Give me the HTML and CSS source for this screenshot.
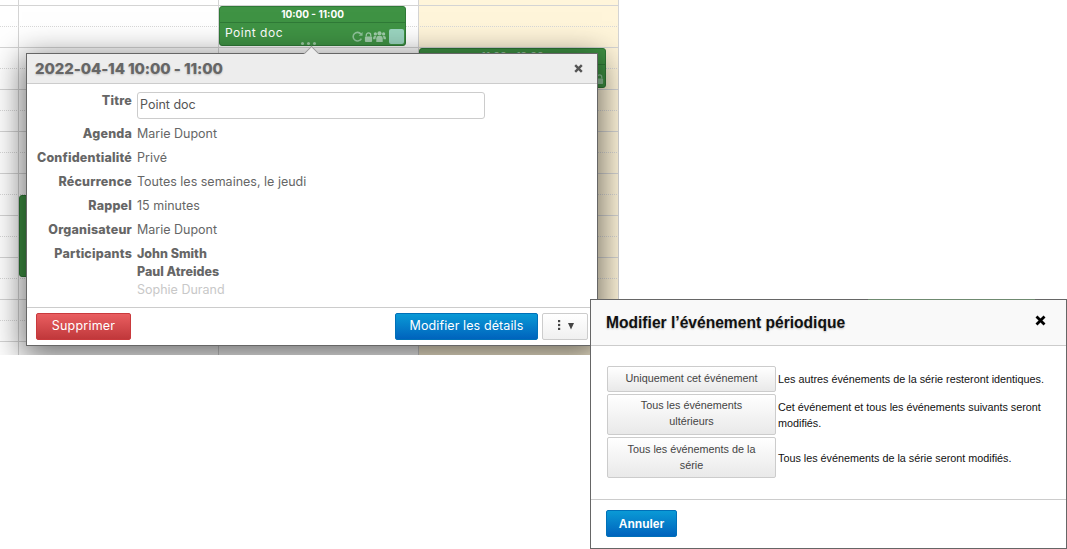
FILE: index.html
```html
<!DOCTYPE html>
<html lang="fr">
<head>
    <meta charset="utf-8">
    <title>Point doc</title>
    <link rel="stylesheet" href="styles.css">
</head>
<body>
<div class="calendar">
    <div class="dayCol gutter"></div>
    <div class="dayCol"></div>
    <div class="dayCol"></div>
    <div class="dayCol today"></div>

    <div class="hourLines">
        <div class="hourRow"></div>
        <div class="hourRow"></div>
        <div class="hourRow"></div>
        <div class="hourRow"></div>
        <div class="hourRow"></div>
        <div class="hourRow"></div>
        <div class="hourRow"></div>
        <div class="hourRow"></div>
        <div class="hourRow"></div>
    </div>

    <div class="event eventMain">
        <div class="eventTime">10:00 - 11:00</div>
        <div class="eventBody">
            <span>Point doc</span>
            <span class="eventIcons">
                <svg class="iconRefresh" width="11" height="11" viewBox="0 0 12 12"><path d="M10.200 8.300a4.700 4.700 0 1 1-.5-5" fill="none" stroke="#8fc39a" stroke-width="1.700"/><path d="M11.500 1v4.200H7.300z" fill="#8fc39a"/></svg>
                <svg width="9" height="10" viewBox="0 0 10 11"><path d="M2.500 5V3.500a2.500 2.500 0 0 1 5 0V5" fill="none" stroke="#a0ccaa" stroke-width="1.400"/><rect x="1" y="5" width="8" height="6" rx="1" fill="#a0ccaa"/></svg>
                <svg width="13" height="11" viewBox="0 0 14 12"><g fill="#a0ccaa"><circle cx="7" cy="2.600" r="2.300"/><circle cx="2.500" cy="3.200" r="1.800"/><circle cx="11.500" cy="3.200" r="1.800"/><path d="M3.500 12V8q0-2.500 2-2.500h3q2 0 2 2.500v4z"/><path d="M0 9V7.500q0-2 2-2h1.200L2.500 9zM14 9V7.500q0-2-2-2h-1.200l.7 3.500z"/></g></svg>
                <span class="swatch"></span>
            </span>
        </div>
        <div class="dots"><i></i><i></i><i></i></div>
    </div>

    <div class="event eventSecond">
        <div class="eventTime">11:00 - 12:00</div>
        <div class="eventBody">
            <span class="eventIcons secondIcons">
                <svg width="9" height="10" viewBox="0 0 10 11"><path d="M2.500 5V3.500a2.500 2.500 0 0 1 5 0V5" fill="none" stroke="#8fc39a" stroke-width="1.400"/><rect x="1" y="5" width="8" height="6" rx="1" fill="#8fc39a"/></svg>
            </span>
        </div>
    </div>
    <div class="event eventLeft"></div>

    <div class="popover">
        <div class="arrow"></div>
        <div class="popHead">
            <span class="popTitle">2022-04-14 10:00 - 11:00</span>
            <svg class="popClose" width="9" height="9" viewBox="0 0 9 9"><path d="M1.200 1.200l6.600 6.600M7.800 1.200L1.200 7.800" stroke="#555" stroke-width="2.400"/></svg>
        </div>
        <div class="popBody">
            <div class="row rowTitle">
                <div class="label">Titre</div>
                <input class="titleInput" type="text" value="Point doc">
            </div>
            <div class="row"><div class="label">Agenda</div><div>Marie Dupont</div></div>
            <div class="row"><div class="label">Confidentialité</div><div>Privé</div></div>
            <div class="row"><div class="label">Récurrence</div><div>Toutes les semaines, le jeudi</div></div>
            <div class="row"><div class="label">Rappel</div><div>15 minutes</div></div>
            <div class="row"><div class="label">Organisateur</div><div>Marie Dupont</div></div>
            <div class="row">
                <div class="label">Participants</div>
                <div class="people">
                    <div class="going">John Smith</div>
                    <div class="going">Paul Atreides</div>
                    <div class="absent">Sophie Durand</div>
                </div>
            </div>
        </div>
        <div class="popFoot">
            <button class="btn btnRed">Supprimer</button>
            <button class="btn btnBlue">Modifier les détails</button>
            <button class="btn btnMore">
                <svg width="17" height="10" viewBox="0 0 17 10"><g fill="#444"><rect x="1" y="0" width="2.200" height="2.200"/><rect x="1" y="3.900" width="2.200" height="2.200"/><rect x="1" y="7.800" width="2.200" height="2.200"/><path d="M11 3h6l-3 6.500z"/></g></svg>
            </button>
        </div>
    </div>
</div>

<div class="dialog">
    <div class="dialogHead">
        <span class="dialogTitle">Modifier l’événement périodique</span>
        <svg class="dialogClose" width="11" height="11" viewBox="0 0 11 11"><path d="M1.500 1.500l8 8M9.500 1.500l-8 8" stroke="#000" stroke-width="2.800"/></svg>
    </div>
    <div class="dialogBody">
        <div class="choice">
            <button class="choiceBtn">Uniquement cet événement</button>
            <div class="choiceText">Les autres événements de la série resteront identiques.</div>
        </div>
        <div class="choice">
            <button class="choiceBtn">Tous les événements ultérieurs</button>
            <div class="choiceText">Cet événement et tous les événements suivants seront modifiés.</div>
        </div>
        <div class="choice choiceLast">
            <button class="choiceBtn">Tous les événements de la série</button>
            <div class="choiceText">Tous les événements de la série seront modifiés.</div>
        </div>
    </div>
    <div class="dialogFoot">
        <button class="btnCancel">Annuler</button>
    </div>
</div>

<div class="behindStrip"></div>
</body>
</html>
```

FILE: styles.css
```css
html, body {
    margin: 0;
    padding: 0;
    background: #fff;
}
body {
    width: 1067px;
    height: 549px;
    position: relative;
    overflow: hidden;
    font-family: "Inter", "Open Sans", sans-serif;
}
button {
    font-family: inherit;
    cursor: pointer;
}

/* calendar behind the popover */
.calendar {
    position: relative;
    width: 619px;
    height: 355px;
    display: flex;
    overflow: hidden;
    background: #fff;
}
.dayCol {
    width: 200px;
    flex: none;
    border-right: 1px solid #d4d4d4;
    box-sizing: border-box;
}
.dayCol.gutter {
    width: 19px;
}
.dayCol.today {
    background-color: #fff5da;
}
.hourLines {
    position: absolute;
    left: 0;
    right: 0;
    top: 5px;
}
.hourRow {
    height: 42px;
    box-sizing: border-box;
    border-top: 1px solid #d4d4d4;
    padding-top: 20px;
}
.hourRow::after {
    content: "";
    display: block;
    border-top: 1px dotted #d8d8d8;
}

.event {
    position: absolute;
    box-sizing: border-box;
    background: #3f9344;
    border: 1px solid #2f7a37;
    border-radius: 3px;
    color: #fff;
    overflow: hidden;
}
.eventMain {
    left: 219px;
    top: 6px;
    width: 187px;
    height: 40px;
}
.eventSecond {
    left: 419px;
    top: 48px;
    width: 187px;
    height: 40px;
}
.eventSecond .eventTime {
    color: #9cc6a2;
}
.eventLeft {
    left: 19px;
    top: 195px;
    width: 30px;
    height: 82px;
}
.eventTime {
    height: 16px;
    line-height: 15px;
    font-size: 10px;
    font-weight: 700;
    text-align: center;
    border-bottom: 1px solid #2f7a37;
    box-sizing: border-box;
}
.eventBody {
    display: flex;
    justify-content: space-between;
    padding: 2px 1px 0 5px;
    font-size: 12px;
    line-height: 16px;
    letter-spacing: 0.5px;
}
.eventIcons {
    display: flex;
    align-items: center;
    margin-top: 4px;
    height: 15px;
}
.iconRefresh {
    margin-right: 1px;
}
.secondIcons {
    margin-left: auto;
}
.swatch {
    width: 15px;
    height: 15px;
    margin-left: 3px;
    border-radius: 2px;
    background: #9bd5c0;
}
.dots {
    position: absolute;
    left: 81px;
    bottom: 0;
    display: flex;
    gap: 3px;
}
.dots i {
    width: 3px;
    height: 3px;
    border-radius: 50%;
    background: #9cc9a2;
}

/* event popover */
.popover {
    position: absolute;
    left: 26px;
    top: 53px;
    width: 572px;
    height: 293px;
    box-sizing: border-box;
    display: flex;
    flex-direction: column;
    background: #fff;
    border: 1px solid #666;
    box-shadow: 0 8px 30px 4px rgba(0, 0, 0, 0.55);
    color: #666;
    font-size: 12.500px;
}
.arrow {
    position: absolute;
    left: 279px;
    top: -6px;
    width: 10px;
    height: 10px;
    background: #ededed;
    border-left: 1px solid #999;
    border-top: 1px solid #999;
    transform: rotate(45deg);
}
.popHead {
    position: relative;
    height: 30px;
    flex: none;
    display: flex;
    align-items: center;
    justify-content: space-between;
    box-sizing: border-box;
    padding: 0 14px 0 8px;
    background: #ededed;
    border-bottom: 1px solid #ccc;
}
.popTitle {
    font-size: 15px;
    font-weight: 800;
    letter-spacing: -0.1px;
    color: #666;
    text-shadow: 0 1px 2px rgba(0, 0, 0, 0.2);
}
.popBody {
    flex: 1;
    padding-top: 8px;
}
.row {
    display: flex;
    gap: 5px;
    line-height: 18px;
    margin-bottom: 6px;
}
.label {
    width: 105px;
    flex: none;
    text-align: right;
    font-weight: 800;
    letter-spacing: 0.2px;
    white-space: nowrap;
}
.titleInput {
    width: 348px;
    height: 27px;
    box-sizing: border-box;
    padding: 0 2px 2px;
    border: 1px solid #ccc;
    border-radius: 3px;
    font-family: inherit;
    font-size: 12.500px;
    color: #555;
}
.going {
    font-weight: 800;
}
.absent {
    color: #c8c8c8;
}
.popFoot {
    flex: none;
    height: 38px;
    box-sizing: border-box;
    border-top: 1px solid #ccc;
    padding: 5px 9px;
    display: flex;
    gap: 4px;
}
.btn {
    height: 27px;
    box-sizing: border-box;
    border-radius: 2px;
    font-size: 12.500px;
    padding: 0 0 2px;
}
.btnRed {
    width: 95px;
    margin-right: auto;
    color: #fff;
    letter-spacing: 0.2px;
    border: 1px solid #c93a3d;
    background: linear-gradient(#e95e60, #c0383b);
}
.btnBlue {
    width: 143px;
    color: #fff;
    letter-spacing: 0.1px;
    border: 1px solid #0070b8;
    background: linear-gradient(#0a9ad6, #0063bd);
}
.btnMore {
    width: 46px;
    border: 1px solid #ccc;
    background: linear-gradient(#fff, #f0f0f0);
}

/* sliver of another screenshot, lies on the dialog's top edge */
.behindStrip {
    position: absolute;
    left: 868px;
    top: 299px;
    width: 167px;
    height: 1px;
    background: #6f8a70;
}

/* periodic event dialog */
.dialog {
    position: absolute;
    left: 590px;
    top: 299px;
    width: 477px;
    height: 250px;
    box-sizing: border-box;
    display: flex;
    flex-direction: column;
    background: #fff;
    border: 1px solid #666;
    font-family: "Liberation Sans", Arial, sans-serif;
    color: #111;
}
.dialogHead {
    height: 46px;
    flex: none;
    box-sizing: border-box;
    display: flex;
    align-items: center;
    justify-content: space-between;
    padding: 0 20px 0 15px;
    background: #f9f9f9;
    border-bottom: 1px solid #ccc;
}
.dialogTitle {
    font-size: 15.600px;
    font-weight: 700;
    text-shadow: 0 1px 2px rgba(0, 0, 0, 0.25);
}
.dialogClose {
    margin-bottom: 4px;
}
.dialogBody {
    flex: 1;
    padding: 20px 15px 0 16px;
    display: flex;
    flex-direction: column;
    gap: 2px;
}
.choice {
    display: flex;
    align-items: center;
    gap: 2px;
    font-size: 10.800px;
    line-height: 16px;
}
.choiceBtn {
    width: 169px;
    flex: none;
    box-sizing: border-box;
    padding: 2px 12px 5px;
    min-height: 26px;
    border: 1px solid #ccc;
    border-radius: 2px;
    background: linear-gradient(#fff, #e9e9e9);
    color: #444;
    font-size: 10.800px;
    line-height: 16px;
}
.choiceLast .choiceBtn {
    padding: 3px 12px 4px;
}
.dialogFoot {
    flex: none;
    height: 49px;
    box-sizing: border-box;
    padding: 10px 15px;
    border-top: 1px solid #ccc;
}
.btnCancel {
    width: 71px;
    height: 27px;
    padding: 0;
    border: 1px solid #0070b8;
    border-radius: 2px;
    background: linear-gradient(#0a9ad6, #0063bd);
    color: #fff;
    font-weight: 700;
    font-size: 12px;
}
```
